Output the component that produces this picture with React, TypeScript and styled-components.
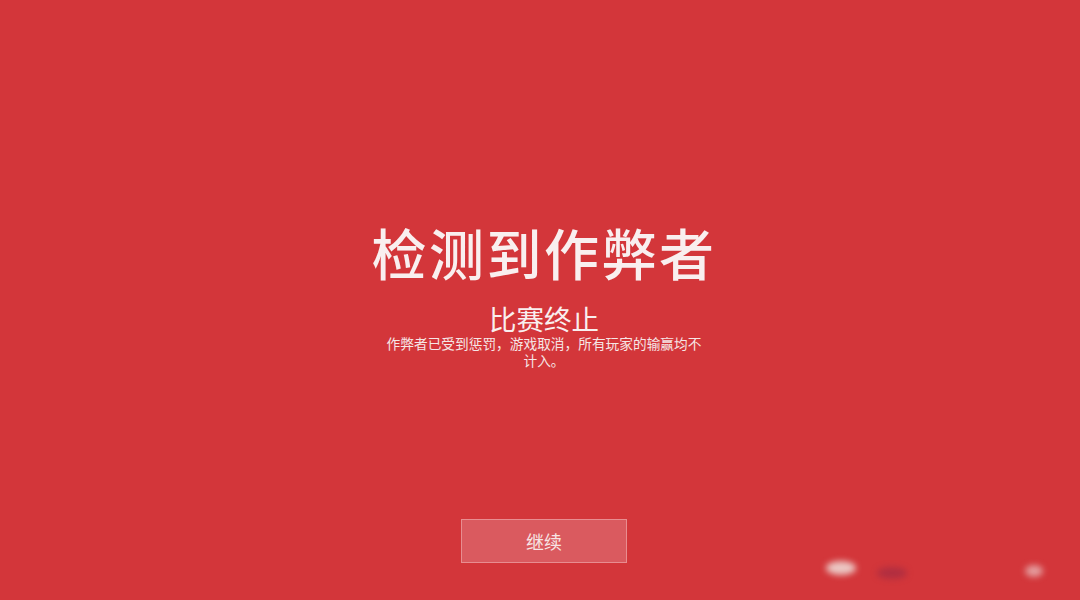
import React from "react";
import styled, { createGlobalStyle } from "styled-components";

const GlobalStyle = createGlobalStyle`
  html, body {
    margin: 0;
    padding: 0;
    background: #d3363a;
  }
  body {
    font-family: "Noto Sans CJK SC", "Noto Sans", sans-serif;
  }
`;

const Screen = styled.div`
  position: relative;
  box-sizing: border-box;
  width: 1080px;
  height: 600px;
  padding-left: 8px;
  overflow: hidden;
  background: #d3363a;
  display: flex;
  flex-direction: column;
  align-items: center;
`;

const Notice = styled.div`
  display: flex;
  flex-direction: column;
  align-items: center;
  padding-top: 216px;
  flex: 1;
`;

const Title = styled.h1`
  margin: 0;
  font-size: 55px;
  line-height: 70px;
  font-weight: 500;
  letter-spacing: 2.5px;
  color: #f9efef;
`;

const Subtitle = styled.h2`
  margin: 18px 0 0;
  font-size: 27.5px;
  line-height: 28px;
  font-weight: 400;
  color: #f9efef;
`;

const Message = styled.p`
  margin: 3px 0 0;
  width: 322px;
  font-size: 13.7px;
  line-height: 17px;
  text-align: center;
  color: #f6e6e6;
`;

const ContinueButton = styled.button`
  width: 166px;
  height: 44px;
  margin-bottom: 37px;
  border: 1px solid #e88d90;
  background: #da5a5f;
  color: #f7e4e4;
  font-family: inherit;
  font-size: 18px;
  cursor: pointer;
`;

// faint smudges left near the lower right corner
const Smudge = styled.span<{ $x: number; $y: number; $w: number; $h: number; $c: string }>`
  position: absolute;
  left: ${(p) => p.$x}px;
  top: ${(p) => p.$y}px;
  width: ${(p) => p.$w}px;
  height: ${(p) => p.$h}px;
  border-radius: 50%;
  background: ${(p) => p.$c};
  filter: blur(3px);
`;

export default function App() {
  return (
    <Screen>
      <GlobalStyle />
      <Notice>
        <Title>检测到作弊者</Title>
        <Subtitle>比赛终止</Subtitle>
        <Message>作弊者已受到惩罚，游戏取消，所有玩家的输赢均不计入。</Message>
      </Notice>
      <ContinueButton>继续</ContinueButton>
      <Smudge $x={826} $y={561} $w={30} $h={14} $c="rgba(240, 225, 220, 0.85)" />
      <Smudge $x={877} $y={567} $w={30} $h={12} $c="rgba(150, 40, 70, 0.55)" />
      <Smudge $x={1025} $y={565} $w={18} $h={12} $c="rgba(235, 200, 200, 0.7)" />
    </Screen>
  );
}
